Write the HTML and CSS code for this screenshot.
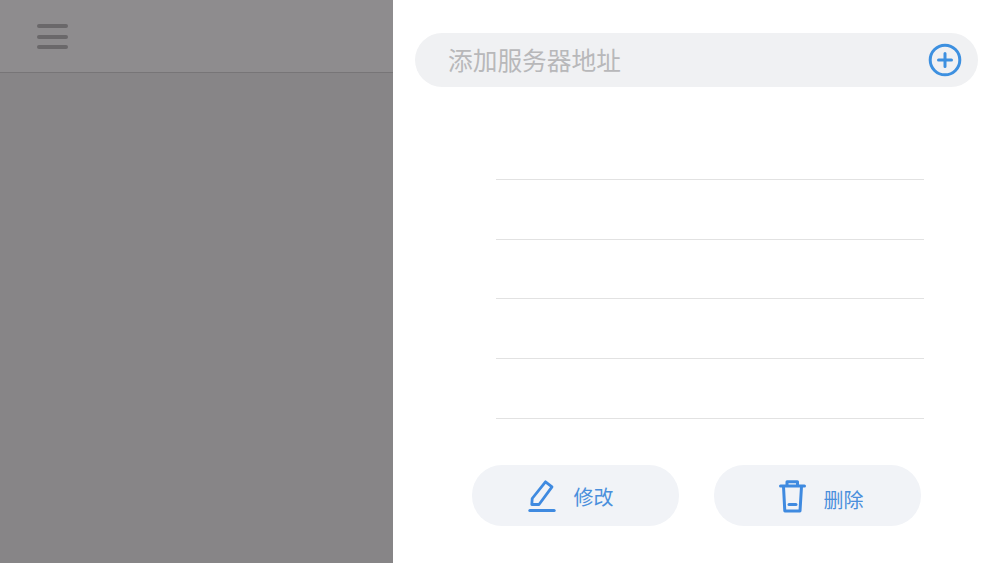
FILE: index.html
```html
<!DOCTYPE html>
<html lang="zh-CN">
<head>
    <meta charset="UTF-8">
    <meta name="viewport" content="width=device-width, initial-scale=1.0">
    <title>服务器地址</title>
    <link rel="stylesheet" href="styles.css">
</head>
<body>
    <div class="container">
        <div class="sidebar">
            <div class="topbar">
                <div class="menu-icon">
                    <span></span>
                    <span></span>
                    <span></span>
                </div>
            </div>
        </div>

        <div class="panel">
            <div class="add-bar">
                <span class="add-text">添加服务器地址</span>
                <svg class="add-icon" width="34" height="34" viewBox="0 0 34 34" fill="none" stroke="#3d90e0" stroke-linecap="round">
                    <circle cx="17" cy="17" r="14.8" stroke-width="3"/>
                    <path d="M17 10.5V23.5M10.5 17H23.5" stroke-width="3"/>
                </svg>
            </div>

            <div class="server-list">
                <div class="server-row"></div>
                <div class="server-row"></div>
                <div class="server-row"></div>
                <div class="server-row"></div>
                <div class="server-row"></div>
            </div>

            <div class="actions">
                <button class="action-btn edit-btn" type="button">
                    <svg width="28" height="34" viewBox="0 0 28 34" fill="none" stroke="#3f8ae0" stroke-width="2.8" stroke-linejoin="round" stroke-linecap="round">
                        <path d="M3.8 25.5L4.2 19.5L17.5 2.8L24 7.8L11 25.5Z"/>
                        <path d="M1.8 31.5H26.2" stroke-width="3"/>
                    </svg>
                    <span>修改</span>
                </button>
                <button class="action-btn delete-btn" type="button">
                    <svg width="28" height="34" viewBox="0 0 28 34" fill="none" stroke="#3f8ae0" stroke-width="3" stroke-linejoin="round" stroke-linecap="round">
                        <path d="M2.5 7H26.5"/>
                        <path d="M9 6.5V2.8H19.5V6.5"/>
                        <path d="M5.5 7.5L6.8 32H22L23.5 7.5"/>
                        <path d="M11 25.5H18"/>
                    </svg>
                    <span>删除</span>
                </button>
            </div>
        </div>
    </div>
</body>
</html>
```

FILE: styles.css
```css
body {
  font-family: "Liberation Sans", "Noto Sans CJK SC", sans-serif;
  margin: 0;
  padding: 0;
  background-color: white;
}

.container {
  display: flex;
  height: 563px;
  overflow: hidden;
}

.sidebar {
  width: 393px;
  background-color: #878587;
}

.topbar {
  height: 72px;
  display: flex;
  align-items: center;
  padding-left: 37px;
  background-color: #8e8c8e;
  border-bottom: 1px solid #777577;
}

.menu-icon {
  display: flex;
  flex-direction: column;
  gap: 6.5px;
  width: 31px;
  margin-top: 1px;
}

.menu-icon span {
  display: block;
  height: 4px;
  border-radius: 2px;
  background-color: #6a686a;
}

.panel {
  flex: 1;
  background-color: white;
  padding-top: 33px;
}

.add-bar {
  display: flex;
  align-items: center;
  justify-content: space-between;
  width: 563px;
  height: 54px;
  margin-left: 22px;
  padding: 0 16px 0 33px;
  box-sizing: border-box;
  border-radius: 27px;
  background-color: #f0f1f3;
}

.add-text {
  font-size: 24.7px;
  color: #b8b8ba;
  margin-bottom: 3px;
}

.server-list {
  width: 428px;
  margin: 33px 0 0 103px;
}

.server-row {
  height: 58.8px;
  border-bottom: 1px solid #e2e2e2;
}

.actions {
  display: flex;
  gap: 35px;
  margin: 46px 0 0 79px;
}

.action-btn {
  display: flex;
  align-items: center;
  justify-content: center;
  gap: 18px;
  width: 207px;
  height: 61px;
  padding: 2px 0 0;
  border: none;
  border-radius: 30px;
  background-color: #f1f3f7;
  font-family: inherit;
  font-size: 20px;
  color: #4a8fdc;
}

.edit-btn {
  padding-right: 10px;
}

.edit-btn span {
  margin-top: 1px;
}

.delete-btn {
  padding-left: 6px;
}

.delete-btn span {
  margin-top: 7px;
}
```
